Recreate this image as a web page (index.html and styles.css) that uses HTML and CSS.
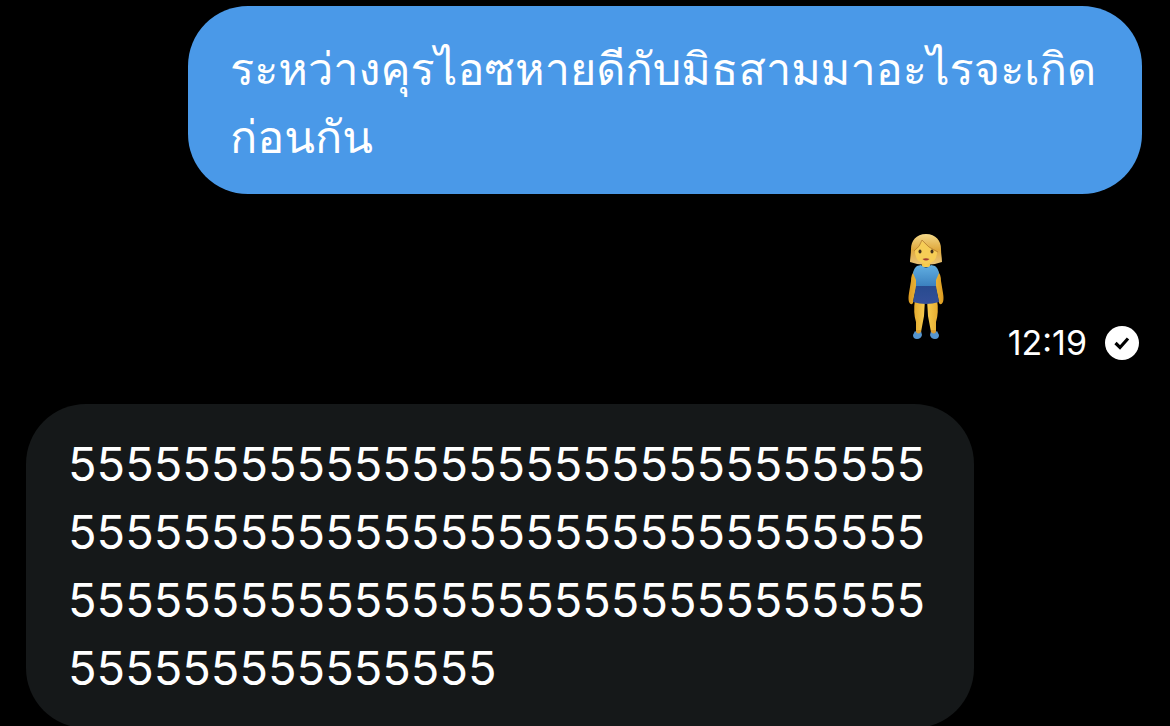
FILE: index.html
```html
<!DOCTYPE html>
<html lang="th">
<head>
<meta charset="utf-8">
<meta name="viewport" content="width=device-width, initial-scale=1">
<title>Chat</title>
<link rel="stylesheet" href="styles.css">
</head>
<body>
<main class="chat">
  <p class="bubble bubble-sent">ระหว่างคุรไอซหายดีกับมิธสามมาอะไรจะเกิด<br>ก่อนกัน</p>
  <div class="sticker-row">
    <svg class="sticker" viewBox="0 0 36 106" role="img" aria-label="Woman standing">
      <defs>
        <linearGradient id="hair" x1="0" y1="0" x2="0" y2="1"><stop offset="0" stop-color="#f5d989"/><stop offset=".5" stop-color="#dfa93e"/><stop offset="1" stop-color="#e9c47a"/></linearGradient>
        <linearGradient id="skin" x1="0" y1="0" x2="1" y2="0"><stop offset="0" stop-color="#dc9b20"/><stop offset=".5" stop-color="#f8cf52"/><stop offset="1" stop-color="#dc9b20"/></linearGradient>
        <linearGradient id="top" x1="0" y1="0" x2="0" y2="1"><stop offset="0" stop-color="#62afe2"/><stop offset="1" stop-color="#397fbd"/></linearGradient>
        <linearGradient id="skirt" x1="0" y1="0" x2="0" y2="1"><stop offset="0" stop-color="#284b8f"/><stop offset="1" stop-color="#344f98"/></linearGradient>
      </defs>
      <path fill="url(#hair)" d="M18 0C8 0 3 7 3 15C3 20 2 25 2 28Q10 31 18 31Q26 31 34 28C34 24 33 20 33 15C33 7 28 0 18 0Z"/>
      <path fill="url(#skin)" d="M14 26h8v7h-8ZM7 36Q3 40 3 47L1 59Q0 65 1 68Q3 72 5 69L6 63L10 47ZM29 36Q33 40 33 47L35 59Q36 65 35 68Q33 72 31 69L30 63L26 47ZM7 65H17L16 82L13 98H8L8 88Q5 79 7 65ZM19 65H29Q31 79 28 88L28 98H23L20 82Z"/>
      <path fill="#f6cd56" d="M7 16Q12 13 14 7Q20 14 29 18Q29 29 18 30Q7 29 7 17Z"/>
      <path fill="none" stroke="#b98230" stroke-width=".8" d="M14 6Q12 13 6 17M14 6Q20 14 30 18"/>
      <ellipse cx="12" cy="17.500" rx="1.500" ry="2" fill="#42301d"/>
      <ellipse cx="24" cy="17.500" rx="1.500" ry="2" fill="#42301d"/>
      <path fill="#a33e32" d="M14.500 25Q18 23.500 21.500 25Q18 28 14.500 25Z"/>
      <path fill="url(#top)" d="M9 32L13 31Q18 36 23 31L27 32Q30 34 31 39L28 46V53H8V46L5 39Q6 34 9 32Z"/>
      <path fill="url(#skirt)" d="M8 52H28L31 68Q18 72 5 68Z"/>
      <path fill="#5695cf" d="M7 97Q10 100 13 97L14 101Q13 105 9 105Q5 105 5 101ZM23 97Q26 100 29 97L31 101Q31 105 27 105Q23 105 22 101Z"/>
      <path fill="#d99e35" d="M8 96h5v2q-3 3-5 0ZM23 96h5v2q-2 3-5 0Z"/>
    </svg>
    <div class="meta">
      <time class="time">12:19</time>
      <svg class="check" viewBox="0 0 34 34" role="img" aria-label="Sent">
        <circle cx="17" cy="17" r="17" fill="#fff"/>
        <path d="M10.500 17L15 21.500L23 12.500" fill="none" stroke="#000" stroke-width="3.200"/>
      </svg>
    </div>
  </div>
  <p class="bubble bubble-received">555555555555555555555555555555555555555555555555555555555555555555555555555555555555555555555555555555555</p>
</main>
</body>
</html>
```
FILE: styles.css
```css
* {
  box-sizing: border-box;
}

body {
  margin: 0;
  background: #000;
  color: #fff;
  font-family: Inter, "Noto Sans", sans-serif;
}

.chat {
  display: flex;
  flex-direction: column;
  padding: 6px 28px 0 26px;
}

.bubble {
  margin: 0;
  padding: 26px 42px;
  border-radius: 60px;
  font-size: 47px;
  line-height: 68px;
}

.bubble-sent {
  align-self: flex-end;
  width: 954px;
  max-width: 100%;
  padding: 29px 40px 23px 42px;
  background: #4a99e8;
  font-family: Thonburi, Garuda, Umpush, Waree, Loma, Inter, sans-serif;
  font-size: 45px;
}

.bubble-received {
  align-self: flex-start;
  width: 948px;
  max-width: 100%;
  margin-top: 44px;
  background: #151819;
  overflow-wrap: anywhere;
}

.sticker-row {
  display: flex;
  justify-content: flex-end;
  align-items: flex-end;
  gap: 64px;
  margin-top: 40px;
  padding-right: 3px;
}

.sticker {
  width: 36px;
  height: 106px;
  margin-bottom: 20px;
}

.meta {
  display: flex;
  align-items: center;
  gap: 18px;
}

.time {
  font-size: 34px;
  line-height: 34px;
}

.check {
  width: 34px;
  height: 34px;
}
```
